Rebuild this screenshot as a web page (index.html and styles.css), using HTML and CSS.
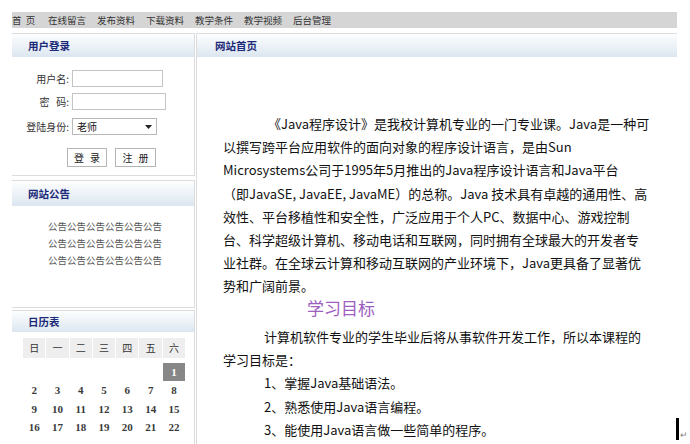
FILE: index.html
```html
<!DOCTYPE html>
<html lang="zh-CN">
<head>
<meta charset="utf-8">
<title>网站首页</title>
<link rel="stylesheet" href="styles.css">
</head>
<body>
<div class="page">
  <nav class="nav">
    <a class="nav-item home">首 页</a>
    <a class="nav-item">在线留言</a>
    <a class="nav-item">发布资料</a>
    <a class="nav-item">下载资料</a>
    <a class="nav-item">教学条件</a>
    <a class="nav-item">教学视频</a>
    <a class="nav-item">后台管理</a>
  </nav>
  <div class="main">
    <aside class="side">
      <section class="panel login">
        <h2 class="panel-title">用户登录</h2>
        <form class="login-form">
          <div class="row r1"><label class="lbl">用户名:</label><input class="field f1" type="text"></div>
          <div class="row r2"><label class="lbl">密&nbsp;&nbsp;&nbsp;码:</label><input class="field f2" type="password"></div>
          <div class="row r3"><label class="lbl">登陆身份:</label>
            <div class="select"><span>老师</span>
              <svg class="caret" width="7" height="4" viewBox="0 0 7 4"><path d="M0 0H7L3.5 4Z" fill="#222"/></svg>
            </div>
          </div>
          <div class="btns"><button type="button" class="btn b1">登 录</button><button type="button" class="btn b2">注 册</button></div>
        </form>
      </section>
      <section class="panel notice">
        <h2 class="panel-title">网站公告</h2>
        <div class="notice-body">
          <p>公告公告公告公告公告公告</p>
          <p>公告公告公告公告公告公告</p>
          <p>公告公告公告公告公告公告</p>
        </div>
      </section>
      <section class="panel cal">
        <h2 class="panel-title">日历表</h2>
        <div class="cal-grid">
          <div class="wd">日</div><div class="wd">一</div><div class="wd">二</div><div class="wd">三</div><div class="wd">四</div><div class="wd">五</div><div class="wd">六</div>
          <div class="d first"></div><div class="d first"></div><div class="d first"></div><div class="d first"></div><div class="d first"></div><div class="d first"></div><div class="d first today">1</div>
          <div class="d">2</div><div class="d">3</div><div class="d">4</div><div class="d">5</div><div class="d">6</div><div class="d">7</div><div class="d">8</div>
          <div class="d">9</div><div class="d">10</div><div class="d">11</div><div class="d">12</div><div class="d">13</div><div class="d">14</div><div class="d">15</div>
          <div class="d">16</div><div class="d">17</div><div class="d">18</div><div class="d">19</div><div class="d">20</div><div class="d">21</div><div class="d">22</div>
        </div>
      </section>
    </aside>
    <section class="panel content">
      <h2 class="panel-title">网站首页</h2>
      <div class="article">
        <p class="para p1">《Java程序设计》是我校计算机专业的一门专业课。Java是一种可<br>以撰写跨平台应用软件的面向对象的程序设计语言，是由Sun<br>Microsystems公司于1995年5月推出的Java程序设计语言和Java平台<br>（即JavaSE, JavaEE, JavaME）的总称。Java 技术具有卓越的通用性、高<br>效性、平台移植性和安全性，广泛应用于个人PC、数据中心、游戏控制<br>台、科学超级计算机、移动电话和互联网，同时拥有全球最大的开发者专<br>业社群。在全球云计算和移动互联网的产业环境下，Java更具备了显著优<br>势和广阔前景。</p>
        <h3 class="goal">学习目标</h3>
        <p class="para p2">计算机软件专业的学生毕业后将从事软件开发工作，所以本课程的<br>学习目标是：</p>
        <ol class="goals">
          <li>1、掌握Java基础语法。</li>
          <li>2、熟悉使用Java语言编程。</li>
          <li>3、能使用Java语言做一些简单的程序。</li>
        </ol>
      </div>
    </section>
  </div>
  <span class="cursor"></span><span class="ret">↵</span>
</div>
</body>
</html>
```

FILE: styles.css
```css
html, body {
  margin: 0;
  padding: 0;
  height: 444px;
  overflow: hidden;
  background: #fff;
}
body {
  font-family: "Noto Sans CJK SC", "Noto Sans", sans-serif;
  color: #333;
}
.page {
  position: relative;
  width: 665px;
  padding: 12px 13px 0 12px;
}
.nav {
  display: flex;
  gap: 11px;
  height: 16px;
  background: #d5d5d5;
  font-size: 9.5px;
  line-height: 16px;
}
.nav-item {
  color: #333;
  white-space: pre;
}
.nav-item.home { width: 25px; word-spacing: 2px; }
.main {
  display: flex;
  gap: 1px;
  margin-top: 5px;
  align-items: flex-start;
}
.side {
  width: 183px;
  display: flex;
  flex-direction: column;
}
.panel {
  border: 1px solid #dcdcdc;
  border-left: none;
  background: #fff;
}
.panel-title {
  margin: 0;
  height: 23px;
  line-height: 23px;
  padding-left: 16px;
  font-size: 10.5px;
  font-weight: bold;
  color: #1b2a78;
  background: linear-gradient(#fdfeff, #dce6f0);
}
.login { height: 141px; }
.login-form {
  padding-top: 13px;
}
.row {
  display: flex;
  align-items: center;
  gap: 3px;
  height: 17px;
}
.r2 { margin-top: 6px; }
.r3 { margin-top: 8px; }
.lbl {
  width: 57px;
  text-align: right;
  font-size: 10px;
  color: #333;
  white-space: nowrap;
}
.field {
  box-sizing: border-box;
  height: 17px;
  border: 1px solid #c4c4c4;
  padding: 0;
  margin: 0;
}
.f1 { width: 91px; }
.f2 { width: 94px; }
.select {
  box-sizing: border-box;
  width: 85px;
  height: 17px;
  border: 1px solid #b8b8b8;
  display: flex;
  align-items: center;
  justify-content: space-between;
  padding: 0 4px 0 4px;
  font-size: 10px;
  color: #111;
}
.btns {
  display: flex;
  gap: 8px;
  margin: 13px 0 0 55px;
}
.btn {
  box-sizing: border-box;
  height: 19px;
  width: 40px;
  padding: 0;
  background: #fff;
  border: 1px solid #b5b5b5;
  font-family: inherit;
  font-size: 10px;
  color: #222;
  word-spacing: 4px;
}
.b2 { width: 41px; }
.notice {
  margin-top: 4px;
  height: 126px;
}
.notice .panel-title { height: 25px; line-height: 25px; }
.notice-body {
  padding-top: 12px;
  text-align: center;
  padding-left: 4px;
}
.notice-body p {
  margin: 0;
  font-size: 9.5px;
  line-height: 17px;
  color: #555;
}
.cal {
  margin-top: 2px;
  height: 140px;
}
.cal .panel-title { height: 21px; line-height: 21px; }
.cal-grid {
  display: grid;
  grid-template-columns: repeat(7, 22.3px);
  column-gap: 1px;
  width: 163px;
  margin: 6px 0 0 11px;
}
.wd {
  height: 20px;
  line-height: 20px;
  text-align: center;
  background: #eeeeee;
  font-size: 10px;
  color: #333;
  margin-bottom: 5px;
}
.d {
  height: 18.5px;
  line-height: 18.5px;
  text-align: center;
  font-family: "Liberation Serif", serif;
  font-size: 11px;
  font-weight: bold;
  color: #3a3a3a;
}
.d.first { height: 18px; line-height: 18px; }
.d.today {
  background: #878787;
  color: #fff;
}
.content {
  flex: 1;
  height: 430px;
  border-right: none;
  border-left: 1px solid #dcdcdc;
}
.content .panel-title { padding-left: 18px; }
.article {
  padding: 55px 0 0 26px;
  color: #111;
  font-size: 13px;
}
.para {
  margin: 0;
  line-height: 23.2px;
  white-space: nowrap;
}
.p1 { text-indent: 45px; }
.goal {
  margin: 0;
  padding-left: 84px;
  font-size: 17px;
  font-weight: normal;
  line-height: 20px;
  height: 20px;
  color: #9d5fbf;
}
.p2 {
  margin-top: 7px;
  text-indent: 41px;
}
.goals {
  list-style: none;
  margin: 0;
  padding: 0 0 0 41px;
}
.goals li {
  line-height: 23.5px;
  white-space: nowrap;
}
.cursor {
  position: absolute;
  left: 676px;
  top: 418px;
  width: 3px;
  height: 22px;
  background: #000;
}
.ret {
  position: absolute;
  left: 680px;
  top: 430px;
  font-size: 9px;
  color: #888;
  line-height: 10px;
}
```
